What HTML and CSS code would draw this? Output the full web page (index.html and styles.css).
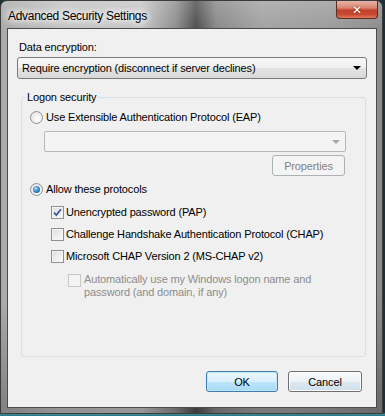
FILE: index.html
```html
<!DOCTYPE html>
<html>
<head>
<meta charset="utf-8">
<link rel="stylesheet" href="styles.css">
</head>
<body>
<div class="window">
  <div class="titlebar">
    <span class="title">Advanced Security Settings</span>
    <div class="close"><span>✕</span></div>
  </div>
  <div class="client">
    <div class="field-label">Data encryption:</div>
    <div class="combo">
      <span class="combo-text">Require encryption (disconnect if server declines)</span>
      <span class="arrow"></span>
    </div>
    <fieldset class="group">
      <legend>Logon security</legend>
      <div class="row">
        <span class="radio"></span>
        <span>Use Extensible Authentication Protocol (EAP)</span>
      </div>
      <div class="eap">
        <div class="combo combo-disabled"><span class="arrow arrow-disabled"></span></div>
        <div class="btn btn-disabled">Properties</div>
      </div>
      <div class="row row-allow">
        <span class="radio radio-on"></span>
        <span>Allow these protocols</span>
      </div>
      <div class="protocols">
        <div class="row">
          <span class="check check-on">
            <svg width="9" height="9" viewBox="0 0 9 9"><path d="M1 4.5 L3.3 7 L8 1.2" fill="none" stroke="#3c5a9a" stroke-width="1.8"/></svg>
          </span>
          <span>Unencrypted password (PAP)</span>
        </div>
        <div class="row row-gap">
          <span class="check"></span>
          <span>Challenge Handshake Authentication Protocol (CHAP)</span>
        </div>
        <div class="row row-gap">
          <span class="check"></span>
          <span>Microsoft CHAP Version 2 (MS-CHAP v2)</span>
        </div>
        <div class="auto">
          <span class="check check-disabled"></span>
          <span class="auto-text">Automatically use my Windows logon name and<br>password (and domain, if any)</span>
        </div>
      </div>
    </fieldset>
    <div class="buttons">
      <div class="btn btn-default">OK</div>
      <div class="btn btn-normal">Cancel</div>
    </div>
  </div>
</div>
</body>
</html>
```

FILE: styles.css
```css
html, body {
  margin: 0;
  padding: 0;
}
body {
  width: 385px;
  height: 416px;
  background: linear-gradient(to bottom, #1e2f36 0, #1e2f36 413px, #3f8fa0 414px, #2a6f80 416px);
  font-family: "Liberation Sans", Arial, sans-serif;
  font-size: 11px;
  letter-spacing: -0.15px;
  color: #000;
  overflow: hidden;
}
.window {
  width: 383px;
  height: 414px;
  box-sizing: border-box;
  border: 1px solid #3b3b3b;
  border-radius: 7px 7px 0 0;
  padding: 0 5px 5px 6px;
  display: flex;
  flex-direction: column;
  background:
    linear-gradient(to bottom, rgba(255,255,255,0.18) 0, rgba(255,255,255,0) 30px, rgba(0,0,0,0) 300px, rgba(0,0,0,0.25) 414px),
    linear-gradient(to right, #a9a9a9 0, #c3c3c3 60px, #c6c6c6 140px, #8d8d8d 175px, #4e4e4e 195px, #888 215px, #a2a2a2 260px, #9b9b9b 330px, #8a8a8a 383px);
}
.titlebar {
  height: 27px;
  display: flex;
  align-items: flex-start;
}
.title {
  margin-top: 8px;
  margin-left: 1px;
  line-height: 15px;
  font-size: 12px;
  letter-spacing: -0.3px;
  text-shadow: 0 0 6px #fff, 0 0 8px #fff, 0 0 10px #f4f4f4;
}
.close {
  margin-left: auto;
  margin-right: -1px;
  width: 42px;
  height: 18px;
  box-sizing: border-box;
  border: 1px solid #5b2c24;
  border-top: none;
  border-radius: 0 0 4px 4px;
  background: linear-gradient(to bottom, #e7b3a8 0, #d98572 40%, #c0402c 55%, #c94b35 80%, #e07a5e 100%);
  display: flex;
  align-items: center;
  justify-content: center;
  color: #fff;
  font-family: "DejaVu Sans", sans-serif;
  font-size: 12px;
  font-weight: bold;
  letter-spacing: 0;
  text-shadow: 0 0 2px #5a1a10;
}
.client {
  flex: 1;
  background: #f0f0f0;
  border: 1px solid #4b4b4b;
  padding: 10px 9px 14px 9px;
  display: flex;
  flex-direction: column;
}
.field-label {
  margin-left: 2px;
  line-height: 16px;
}
.combo {
  margin-top: 2px;
  height: 22px;
  box-sizing: border-box;
  border: 1px solid #7a7a7a;
  border-radius: 3px;
  background: linear-gradient(to bottom, #f7f7f7 0, #efefef 50%, #e3e3e3 51%, #d9d9d9 100%);
  display: flex;
  align-items: center;
  padding-left: 4px;
  padding-right: 5px;
}
.combo-text {
  flex: 1;
}
.arrow {
  width: 0;
  height: 0;
  border-left: 4px solid transparent;
  border-right: 4px solid transparent;
  border-top: 4px solid #000;
}
.group {
  margin: 10px 1px 0 4px;
  border: 1px solid #d5dfe5;
  border-radius: 3px;
  padding: 4px 8px 0 8px;
  height: 268px;
  box-sizing: border-box;
}
.group legend {
  margin-left: -5px;
  padding: 0 2px;
  line-height: 16px;
}
.row {
  display: flex;
  align-items: center;
  height: 16px;
}
.radio {
  width: 13px;
  height: 13px;
  box-sizing: border-box;
  border: 1px solid #8e8f8f;
  border-radius: 50%;
  background: radial-gradient(circle at 60% 65%, #fdfdfd 0, #e9e9e9 70%, #d4d4d4 100%);
  margin-right: 3px;
  display: flex;
  align-items: center;
  justify-content: center;
}
.radio-on::after {
  content: "";
  width: 7px;
  height: 7px;
  border-radius: 50%;
  background: radial-gradient(circle at 40% 35%, #b9e1fb 0, #3c8ed4 45%, #0d3e8a 100%);
}
.eap {
  margin-top: 6px;
  margin-left: 14px;
  width: 302px;
  display: flex;
  flex-direction: column;
  align-items: flex-end;
}
.combo-disabled {
  margin-top: 0;
  width: 302px;
  height: 21px;
  border-color: #b5b8ba;
  border-radius: 2px;
  background: #f4f4f4;
  justify-content: flex-end;
  padding-right: 5px;
}
.arrow-disabled {
  border-top-color: #a4a4a4;
}
.btn {
  height: 21px;
  box-sizing: border-box;
  display: flex;
  align-items: center;
  justify-content: center;
  border-radius: 3px;
}
.btn-disabled {
  margin-top: 3px;
  margin-right: 1px;
  width: 73px;
  border: 1px solid #adb2b5;
  background: #f4f4f4;
  color: #838383;
}
.row-allow {
  margin-top: 5px;
}
.protocols {
  margin-left: 21px;
  margin-top: 7px;
}
.row-gap {
  margin-top: 6px;
}
.check {
  width: 13px;
  height: 13px;
  box-sizing: border-box;
  border: 1px solid #8e8f8f;
  background: linear-gradient(135deg, #dcdcdc 0, #f0f0f0 60%, #fbfbfb 100%);
  box-shadow: inset 0 0 0 1px #f5f5f5;
  margin-right: 2px;
  display: flex;
  align-items: center;
  justify-content: center;
}
.check-disabled {
  border-color: #c8c8c8;
  background: #f4f4f4;
  box-shadow: none;
}
.auto {
  margin-top: 10px;
  margin-left: 17px;
  display: flex;
  align-items: flex-start;
}
.auto .check {
  margin-right: 3px;
}
.auto-text {
  line-height: 13px;
  margin-top: -1px;
  color: #8d8d8d;
}
.buttons {
  margin-top: 14px;
  display: flex;
  justify-content: flex-end;
  gap: 10px;
  margin-right: 5px;
}
.btn-default {
  width: 72px;
  border: 1px solid #3c7fb1;
  background: linear-gradient(to bottom, #eaf6fd 0, #d9f0fc 50%, #bee6fd 51%, #a7d9f5 100%);
  box-shadow: inset 0 0 0 1px #c4e5f6;
}
.btn-normal {
  width: 74px;
  border: 1px solid #707070;
  background: linear-gradient(to bottom, #f6f9fb 0, #eef3f7 50%, #dde8f0 51%, #cfe0ec 100%);
  box-shadow: inset 0 0 0 1px #fcfcfc;
}
```
